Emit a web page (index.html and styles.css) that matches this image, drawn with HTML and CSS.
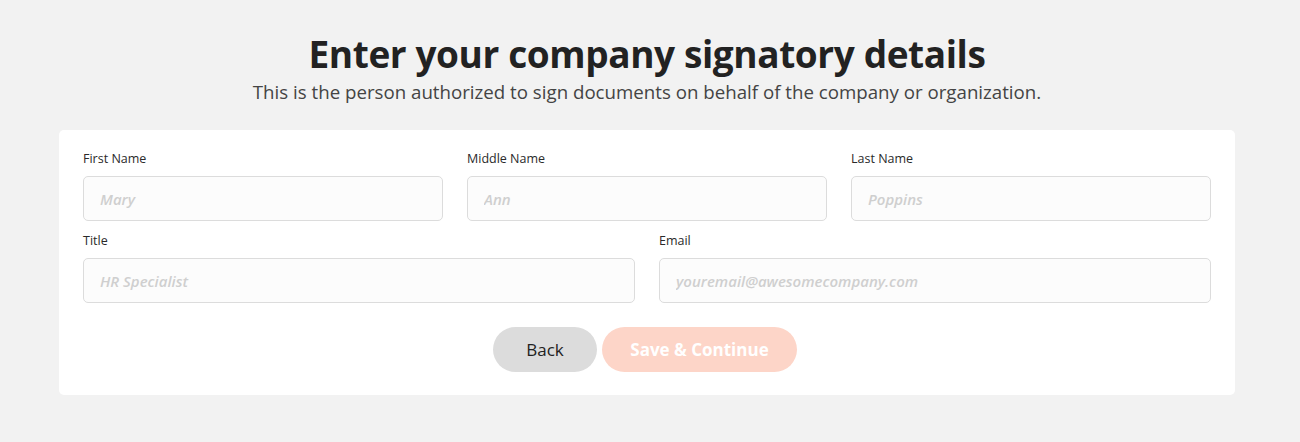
FILE: index.html
```html
<!DOCTYPE html>
<html lang="en">
<head>
    <meta charset="UTF-8">
    <meta name="viewport" content="width=device-width, initial-scale=1.0">
    <title>Company Signatory</title>
    <link rel="stylesheet" href="styles.css">
</head>
<body>
    <div class="wrapper">
        <h1 class="heading">Enter your company signatory details</h1>
        <p class="subheading">This is the person authorized to sign documents on behalf of the company or organization.</p>
        <form class="card">
            <div class="row row-three">
                <label class="field">
                    <span class="label">First Name</span>
                    <input type="text" placeholder="Mary">
                </label>
                <label class="field">
                    <span class="label">Middle Name</span>
                    <input type="text" placeholder="Ann">
                </label>
                <label class="field">
                    <span class="label">Last Name</span>
                    <input type="text" placeholder="Poppins">
                </label>
            </div>
            <div class="row row-two">
                <label class="field">
                    <span class="label">Title</span>
                    <input type="text" placeholder="HR Specialist">
                </label>
                <label class="field">
                    <span class="label">Email</span>
                    <input type="email" placeholder="youremail@awesomecompany.com">
                </label>
            </div>
            <div class="actions">
                <button type="button" class="btn btn-back">Back</button>
                <button type="submit" class="btn btn-save" disabled>Save &amp; Continue</button>
            </div>
        </form>
    </div>
</body>
</html>
```

FILE: styles.css
```css
body {
    margin: 0;
    background-color: #f2f2f2;
    font-family: "Open Sans", "Liberation Sans", Arial, sans-serif;
    color: #222;
}
.wrapper {
    padding: 31px 65px 0 59px;
}
.heading {
    margin: 0;
    text-align: center;
    font-size: 37px;
    line-height: 46px;
    font-weight: 700;
    color: #222;
    letter-spacing: -0.4px;
}
.subheading {
    margin: 2px 0 25px;
    text-align: center;
    font-size: 18.7px;
    line-height: 26px;
    color: #444;
}
.card {
    background-color: #fff;
    border-radius: 5px;
    padding: 20px 24px 23px;
}
.row {
    display: grid;
    gap: 24px;
    margin-bottom: 11px;
}
.row-three {
    grid-template-columns: repeat(3, 1fr);
}
.row-two {
    grid-template-columns: repeat(2, 1fr);
    margin-bottom: 24px;
}
.field {
    display: flex;
    flex-direction: column;
}
.label {
    font-size: 12.5px;
    line-height: 18px;
    color: #2a2a2a;
    margin-bottom: 8px;
}
input {
    box-sizing: border-box;
    height: 45px;
    padding: 0 16px;
    border: 1px solid #dcdcdc;
    border-radius: 5px;
    background-color: #fcfcfc;
    font-family: inherit;
    font-size: 15px;
    color: #222;
}
input::placeholder {
    color: #cfcfcf;
    font-style: italic;
    font-weight: 600;
}
.actions {
    display: flex;
    justify-content: center;
    gap: 5px;
    margin-right: 4px;
}
.btn {
    height: 45px;
    border: none;
    border-radius: 23px;
    font-family: inherit;
    font-size: 17px;
    cursor: pointer;
}
.btn-back {
    width: 104px;
    background-color: #dcdcdc;
    color: #222;
}
.btn-save {
    width: 195px;
    background-color: #fdd5c8;
    color: #fff;
    font-weight: 700;
}
```
